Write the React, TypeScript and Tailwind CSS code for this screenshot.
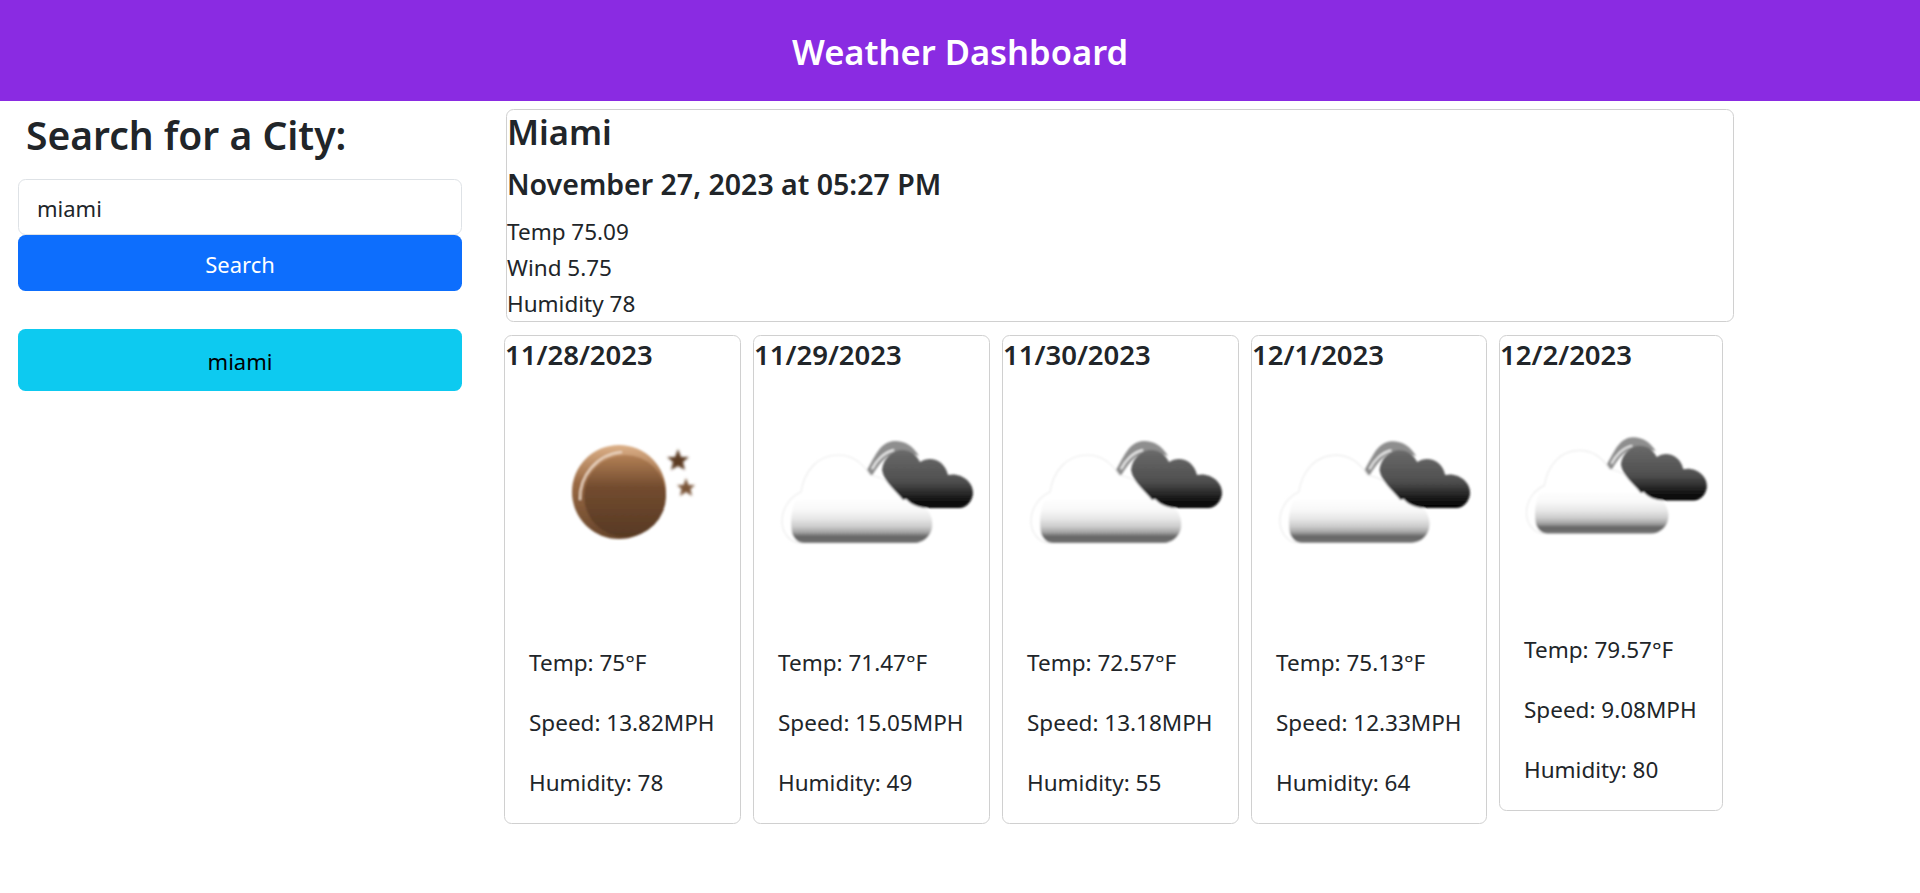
const FONT = "font-['Noto_Sans',sans-serif]";

const CloudIcon = ({ id, size }: { id: string; size: string }) => (
  <svg viewBox="0 0 235 235" className={`block ${size}`}>
    <defs>
      <linearGradient id={`${id}-white`} x1="0" y1="126" x2="0" y2="172" gradientUnits="userSpaceOnUse">
        <stop offset="0" stopColor="#ffffff" />
        <stop offset="0.26" stopColor="#f8f8f8" />
        <stop offset="0.46" stopColor="#e6e6e6" />
        <stop offset="0.62" stopColor="#cccccc" />
        <stop offset="0.74" stopColor="#a6a6a6" />
        <stop offset="0.84" stopColor="#666666" />
        <stop offset="1" stopColor="#747474" />
      </linearGradient>
      <linearGradient id={`${id}-dark`} x1="0" y1="78" x2="0" y2="136" gradientUnits="userSpaceOnUse">
        <stop offset="0" stopColor="#6a6a6a" />
        <stop offset="0.55" stopColor="#4e4e4e" />
        <stop offset="0.82" stopColor="#1c1c1c" />
        <stop offset="1" stopColor="#000000" />
      </linearGradient>
      <filter id={`${id}-soft`} x="-10%" y="-10%" width="120%" height="120%">
        <feGaussianBlur stdDeviation="1.3" />
      </filter>
    </defs>
    <g filter={`url(#${id}-soft)`}>
      <path d="M109 104C114 97 117 90 122 82C127 74 133 69 141 69C151 69 159 74 165 84L150 79C136 78 126 90 118 104C115 106 111 106 109 104Z" fill="#8e8e8e" />
      <path d="M118 97C122 89 130 80 140 78" fill="none" stroke="#eeeeee" strokeWidth="2" />
      <path
        d="M47 171C36 171 28 161 28 149C28 136 36 125 47 120C50 100 63 83 84 83C98 83 108 90 116 103C132 106 148 116 159 130C170 133 178 143 178 153C178 163 170 171 160 171Z"
        fill="#ffffff"
        stroke="#ececec"
        strokeWidth="1.2"
      />
      <path
        d="M42 128C80 124 130 124 162 128C172 134 179 143 178 153C178 163 170 171 160 171H50C44 171 40 167 38 161C36 150 37 138 42 128Z"
        fill={`url(#${id}-white)`}
      />
      <path
        d="M149 128C141 118 130 110 128 98C129 86 139 78 148 78C156 78 162 82 166 90C176 83 191 88 194 103C207 100 220 110 219 122C218 130 212 136 205 136H175C166 136 157 133 152 127Z"
        fill={`url(#${id}-dark)`}
      />
    </g>
  </svg>
);

const MoonIcon = () => (
  <svg viewBox="0 0 235 235" className="block w-[235px] h-[235px]">
    <defs>
      <linearGradient id="moon-outer" x1="0" y1="73" x2="0" y2="167" gradientUnits="userSpaceOnUse">
        <stop offset="0" stopColor="#dcb088" />
        <stop offset="0.4" stopColor="#9a6a44" />
        <stop offset="1" stopColor="#66442a" />
      </linearGradient>
      <linearGradient id="moon-inner" x1="0" y1="82" x2="0" y2="165" gradientUnits="userSpaceOnUse">
        <stop offset="0" stopColor="#b58257" />
        <stop offset="0.4" stopColor="#734c2f" />
        <stop offset="1" stopColor="#573924" />
      </linearGradient>
      <filter id="moon-soft" x="-10%" y="-10%" width="120%" height="120%">
        <feGaussianBlur stdDeviation="1.2" />
      </filter>
      <filter id="star-soft" x="-30%" y="-30%" width="160%" height="160%">
        <feGaussianBlur stdDeviation="1.7" />
      </filter>
    </defs>
    <g filter="url(#moon-soft)">
      <circle cx="114" cy="120" r="47" fill="url(#moon-outer)" />
      <circle cx="120" cy="124" r="41" fill="url(#moon-inner)" />
      <path d="M75 128C74 104 92 82 117 80" fill="none" stroke="#ecd6c2" strokeWidth="2" />
    </g>
    <g filter="url(#star-soft)">
      <path d="M173 77L176 85L184 85L178 90L180 98L173 94L166 98L168 90L162 85L170 85Z" fill="#5c3b24" />
      <path d="M181 106L183.500 113L190 113L185.500 117L187 124L181 120L175 124L176.500 117L172 113L178.500 113Z" fill="#7a5438" />
    </g>
  </svg>
);

const days = [
  { date: '11/28/2023', temp: '75', speed: '13.82', humidity: '78', width: 'w-[237px]', moon: true },
  { date: '11/29/2023', temp: '71.47', speed: '15.05', humidity: '49', width: 'w-[237px]' },
  { date: '11/30/2023', temp: '72.57', speed: '13.18', humidity: '55', width: 'w-[237px]' },
  { date: '12/1/2023', temp: '75.13', speed: '12.33', humidity: '64', width: 'w-[236px]' },
  { date: '12/2/2023', temp: '79.57', speed: '9.08', humidity: '80', width: 'w-[224px]' },
];

export default function App() {
  return (
    <div className={`min-h-[893px] bg-white text-[#212529] ${FONT}`}>
      <header className="h-[101px] bg-[#8a2be2] flex items-center justify-center">
        <h1 className="text-[34.5px] font-semibold text-white leading-none pt-1">Weather Dashboard</h1>
      </header>

      <div className="flex">
        <aside className="w-[504px] shrink-0 pl-[18px]">
          <h2 className="w-[444px] pl-2 pt-[10px] text-[39px] leading-[48px] font-semibold mb-[20px]">Search for a City:</h2>
          <div className="w-[444px] flex flex-col">
            <input
              readOnly
              value="miami"
              className="h-[56px] px-[18px] pt-[2px] border border-[#dee2e6] rounded-[7.5px] text-[22px] text-[#212529] outline-none"
            />
            <button className="h-[56px] pt-[2px] rounded-[7.5px] bg-[#0d6efd] text-white text-[22px]">Search</button>
            <button className="h-[62px] pt-[2px] mt-[38px] rounded-[7.5px] bg-[#0dcaf0] text-black text-[22px]">miami</button>
          </div>
        </aside>

        <main className="pt-2">
          <section className="ml-[2px] w-[1228px] h-[213px] border border-[#d0d0d0] rounded-[7.5px]">
            <h3 className="text-[34.5px] leading-[42px] font-semibold pt-[1px]">Miami</h3>
            <h4 className="text-[28.5px] leading-[36px] font-semibold mt-[13px] mb-[12px]">November 27, 2023 at 05:27 PM</h4>
            <p className="text-[22.5px] leading-[36px]">Temp 75.09</p>
            <p className="text-[22.5px] leading-[36px]">Wind 5.75</p>
            <p className="text-[22.5px] leading-[36px]">Humidity 78</p>
          </section>

          <div className="flex items-start gap-3 mt-[13px]">
            {days.map((d, i) => (
              <div key={d.date} className={`${d.width} shrink-0 border border-[#d0d0d0] rounded-[7.5px]`}>
                <h4 className="text-[27.5px] leading-[36px] font-semibold whitespace-nowrap pt-[1px] h-[36px]">{d.date}</h4>
                {d.moon ? (
                  <MoonIcon />
                ) : (
                  <CloudIcon id={`cloud-${i}`} size={i === 4 ? 'w-[222px] h-[222px]' : i === 3 ? 'w-[234px] h-[235px]' : 'w-[235px] h-[235px]'} />
                )}
                <div className="px-6 pt-[41px] pb-[25px] text-[22.5px] leading-[30px] whitespace-nowrap">
                  <p className="mb-[30px]">Temp: {d.temp}°F</p>
                  <p className="mb-[30px]">Speed: {d.speed}MPH</p>
                  <p>Humidity: {d.humidity}</p>
                </div>
              </div>
            ))}
          </div>
        </main>
      </div>
    </div>
  );
}
